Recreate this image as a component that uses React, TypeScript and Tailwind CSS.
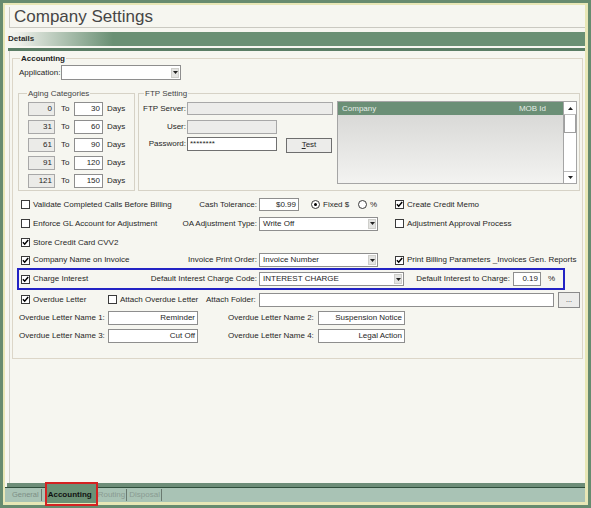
import React from "react";

function Cb({ checked, label, className = "" }: { checked?: boolean; label: string; className?: string }) {
  return (
    <div className={`flex items-center gap-[3px] whitespace-nowrap ${className}`}>
      <span className="relative w-[9px] h-[9px] border border-[#3a3a3a] bg-white shrink-0">
        {checked && (
          <svg className="absolute left-0 top-0" width="7" height="7" viewBox="0 0 7 7">
            <path d="M0.9 3.3 L2.7 5.2 L6.2 1.1" stroke="#000" strokeWidth="1.5" fill="none" />
          </svg>
        )}
      </span>
      <span>{label}</span>
    </div>
  );
}

function Radio({ checked, label, className = "" }: { checked?: boolean; label: string; className?: string }) {
  return (
    <div className={`flex items-center gap-[3px] whitespace-nowrap ${className}`}>
      <span className="w-[9px] h-[9px] rounded-full border border-[#3a3a3a] bg-white flex items-center justify-center shrink-0">
        {checked && <span className="w-[3px] h-[3px] rounded-full bg-black" />}
      </span>
      <span>{label}</span>
    </div>
  );
}

function Field({ className = "", value = "", left }: { className?: string; value?: string; left?: boolean }) {
  return (
    <div
      className={`flex items-center border border-[#8e8e8e] overflow-hidden whitespace-nowrap shrink-0 ${
        left ? "justify-start pl-[2px]" : "justify-end pr-[2px]"
      } ${className}`}
    >
      {value}
    </div>
  );
}

function Select({ className = "", value = "" }: { className?: string; value?: string }) {
  return (
    <div className={`flex items-center border border-[#8e8e8e] bg-white h-[14px] shrink-0 ${className}`}>
      <span className="flex-1 pl-[3px] whitespace-nowrap overflow-hidden">{value}</span>
      <span className="w-[8px] h-[10px] mr-[1px] bg-[#e4e4e2] border border-[#cfcfcb] flex items-center justify-center">
        <svg width="5" height="3" viewBox="0 0 5 3">
          <path d="M0 0h5L2.5 3z" fill="#222" />
        </svg>
      </span>
    </div>
  );
}

export default function App() {
  return (
    <div className="w-[591px] h-[508px] bg-[#678b6f] p-[3px] font-['Liberation_Sans',Arial,sans-serif] text-[8px] leading-none text-[#262626]">
      <div className="w-full h-full bg-[#e8e7b6] pt-[2px] pl-[2px] pr-[3px] pb-[3px]">
        <div className="w-full h-full bg-[#f6f6f0] flex flex-col">
          {/* title */}
          <div className="mt-[2px] ml-[4px] h-[21px] border-l border-b border-[#cac9c1] shrink-0">
            <div className="pl-[4px] text-[17px] leading-[20px] text-[#464646]">Company Settings</div>
          </div>
          {/* details bar */}
          <div className="mt-[4px] ml-[3px] h-[14px] shrink-0 bg-[linear-gradient(to_right,#f6f6f0_0px,#eef0ea_10px,#6a9074_105px)] flex items-center">
            <span className="font-bold text-[#2c2c2c]">Details</span>
          </div>
          <div className="mt-[2px] ml-[3px] h-[3px] bg-[#5a7d65] shrink-0" />
          {/* content */}
          <div className="flex-1 ml-[4px] border-l border-[#d2d2ca]">
            <div className="mt-[7px] ml-[2px] mr-[2px] h-[301px] border border-[#dcd6c8] relative">
              <span className="absolute left-[7px] top-[-6px] bg-[#f6f6f0] px-[1px] font-bold leading-[11px] text-[#222]">
                Accounting
              </span>
              {/* application */}
              <div className="mt-[6px] h-[15px] flex items-center pl-[6px]">
                <span className="w-[42px]">Application:</span>
                <Select className="w-[120px] h-[15px]" />
              </div>
              {/* aging + ftp */}
              <div className="mt-[13px] h-[98px] flex pl-[5px]">
                <div className="w-[117px] h-[98px] border border-[#d6d2c6] relative">
                  <span className="absolute left-[8px] top-[-5px] bg-[#f6f6f0] px-[1px] leading-[10px] text-[#444]">
                    Aging Categories
                  </span>
                  <div className="pt-[8px] pl-[9px] flex flex-col gap-[4px]">
                    {[
                      ["0", "30"],
                      ["31", "60"],
                      ["61", "90"],
                      ["91", "120"],
                      ["121", "150"],
                    ].map(([a, b]) => (
                      <div key={a} className="flex items-center h-[14px]">
                        <Field className="w-[27px] h-[14px] bg-[#ebebe8] border-[#a8a8a8]" value={a} />
                        <span className="w-[19px] pl-[6px]">To</span>
                        <Field className="w-[29px] h-[14px] bg-white" value={b} />
                        <span className="pl-[4px]">Days</span>
                      </div>
                    ))}
                  </div>
                </div>
                <div className="ml-[3px] w-[442px] h-[98px] border border-[#d6d2c6] relative flex">
                  <span className="absolute left-[5px] top-[-5px] bg-[#f6f6f0] px-[1px] leading-[10px] text-[#444]">
                    FTP Setting
                  </span>
                  <div className="w-[198px] pt-[8px]">
                    <div className="flex items-center h-[13px]">
                      <span className="w-[48px] text-right pr-[1px]">FTP Server:</span>
                      <Field className="w-[146px] h-[13px] bg-[#ececea] border-[#a8a8a8]" />
                    </div>
                    <div className="mt-[5px] flex items-center h-[14px]">
                      <span className="w-[48px] text-right pr-[1px]">User:</span>
                      <Field className="w-[90px] h-[14px] bg-[#ececea] border-[#a8a8a8]" />
                    </div>
                    <div className="mt-[3px] flex items-center h-[14px]">
                      <span className="w-[48px] text-right pr-[1px]">Password:</span>
                      <Field className="w-[90px] h-[14px] bg-white border-[#707070]" value="********" left />
                      <div className="ml-[9px] mt-[2px] w-[46px] h-[15px] bg-[#ececea] border border-[#6e6e6e] flex items-center justify-center">
                        <span>
                          <span className="underline">T</span>est
                        </span>
                      </div>
                    </div>
                  </div>
                  <div className="pt-[7px] flex">
                    <div className="w-[227px] h-[83px] border border-[#a5a5a5] flex flex-col">
                      <div className="h-[13px] bg-[#6b8f76] text-[#e4ece6] flex items-center justify-between pl-[4px] pr-[17px]">
                        <span>Company</span>
                        <span>MOB Id</span>
                      </div>
                      <div className="flex-1 bg-[linear-gradient(to_bottom,#d9d9d7,#f3f3f1)]" />
                    </div>
                    <div className="w-[13px] h-[83px] bg-white border-y border-r border-[#a5a5a5] flex flex-col">
                      <div className="h-[13px] border-b border-[#bcbcbc] flex items-center justify-center">
                        <svg width="5" height="3" viewBox="0 0 5 3">
                          <path d="M0 3h5L2.5 0z" fill="#222" />
                        </svg>
                      </div>
                      <div className="h-[18px] border-b border-x border-[#a0a0a0] bg-white" />
                      <div className="flex-1" />
                      <div className="h-[12px] border-t border-[#bcbcbc] flex items-center justify-center">
                        <svg width="5" height="3" viewBox="0 0 5 3">
                          <path d="M0 0h5L2.5 3z" fill="#222" />
                        </svg>
                      </div>
                    </div>
                  </div>
                </div>
              </div>
              {/* row 1 */}
              <div className="mt-[4px] h-[19px] flex items-center pl-[8px]">
                <div className="w-[236px] flex items-center justify-between">
                  <Cb label="Validate Completed Calls Before Billing" />
                  <span>Cash Tolerance:</span>
                </div>
                <Field className="ml-[2px] w-[40px] h-[13px] bg-white" value="$0.99" />
                <div className="w-[96px] pl-[12px] flex items-center">
                  <Radio checked label="Fixed $" className="w-[47px]" />
                  <Radio label="%" />
                </div>
                <Cb checked label="Create Credit Memo" />
              </div>
              {/* row 2 */}
              <div className="h-[19px] flex items-center pl-[8px]">
                <div className="w-[236px] flex items-center justify-between">
                  <Cb label="Enforce GL Account for Adjustment" />
                  <span>OA Adjustment Type:</span>
                </div>
                <Select className="ml-[2px] w-[119px]" value="Write Off" />
                <Cb label="Adjustment Approval Process" className="ml-[17px]" />
              </div>
              {/* row 3 */}
              <div className="h-[19px] flex items-center pl-[8px]">
                <Cb checked label="Store Credit Card CVV2" />
              </div>
              {/* row 4 */}
              <div className="h-[16px] flex items-center pl-[8px]">
                <div className="w-[236px] flex items-center justify-between">
                  <Cb checked label="Company Name on Invoice" />
                  <span>Invoice Print Order:</span>
                </div>
                <Select className="ml-[2px] w-[119px] h-[13px]" value="Invoice Number" />
                <Cb checked label="Print Billing Parameters _Invoices Gen. Reports" className="ml-[17px]" />
              </div>
              {/* row 5 blue */}
              <div className="ml-[4px] w-[548px] h-[22px] border-2 border-[#2323c4] flex items-center pl-[2px]">
                <div className="w-[236px] flex items-center justify-between">
                  <Cb checked label="Charge Interest" />
                  <span>Default Interest Charge Code:</span>
                </div>
                <Select className="ml-[2px] w-[145px]" value="INTEREST CHARGE" />
                <span className="w-[106px] text-right">Default Interest to Charge:</span>
                <Field className="ml-[3px] w-[28px] h-[14px] bg-white" value="0.19" />
                <span className="ml-[7px]">%</span>
              </div>
              {/* row 6 */}
              <div className="h-[19px] flex items-center pl-[8px]">
                <Cb checked label="Overdue Letter" className="w-[87px]" />
                <Cb label="Attach Overdue Letter" className="w-[98px]" />
                <span className="w-[51px]">Attach Folder:</span>
                <Field className="ml-[2px] w-[295px] h-[14px] bg-white" />
                <div className="ml-[4px] w-[22px] h-[16px] bg-[#ececea] border border-[#8a8a8a] flex items-center justify-center text-[7px]">
                  ...
                </div>
              </div>
              {/* row 7 */}
              <div className="h-[18px] flex items-center pl-[6px]">
                <span className="w-[89px]">Overdue Letter Name 1:</span>
                <Field className="w-[90px] h-[14px] bg-white" value="Reminder" />
                <span className="ml-[30px] w-[90px]">Overdue Letter Name 2:</span>
                <Field className="w-[87px] h-[14px] bg-white" value="Suspension Notice" />
              </div>
              {/* row 8 */}
              <div className="h-[18px] flex items-center pl-[6px]">
                <span className="w-[89px]">Overdue Letter Name 3:</span>
                <Field className="w-[90px] h-[14px] bg-white" value="Cut Off" />
                <span className="ml-[30px] w-[90px]">Overdue Letter Name 4:</span>
                <Field className="w-[87px] h-[14px] bg-white" value="Legal Action" />
              </div>
            </div>
          </div>
          {/* bottom tabs */}
          <div className="h-[4px] ml-[2px] bg-[#6d8d78] shrink-0" />
          <div className="h-[1px] bg-[#2f4d3b] shrink-0" />
          <div className="h-[14px] bg-[#a9c3b5] flex items-center pl-[7px] shrink-0">
            <span className="text-[#7d8e85] text-[7.5px]">General</span>
            <span className="ml-[2px] w-px h-[12px] bg-[#6a7a70]" />
            <span className="relative ml-[5px] w-[49px] h-[14px] flex items-center pl-[1px]">
              <span className="absolute left-0 right-0 top-[-3px] bottom-[-1px] bg-[#6b9176]" />
              <span className="absolute left-[-2px] right-[-2px] top-[-6px] bottom-[-4px] border-2 border-[#d42222]" />
              <span className="relative font-bold text-[#111]">Accounting</span>
            </span>
            <span className="w-px h-[12px] bg-[#6a7a70]" />
            <span className="ml-[1px] text-[#8a9b92]">Routing</span>
            <span className="ml-[1px] w-px h-[12px] bg-[#6a7a70]" />
            <span className="ml-[2px] text-[#8a9b92]">Disposal</span>
            <span className="ml-[1px] w-px h-[12px] bg-[#6a7a70]" />
          </div>
        </div>
      </div>
    </div>
  );
}
